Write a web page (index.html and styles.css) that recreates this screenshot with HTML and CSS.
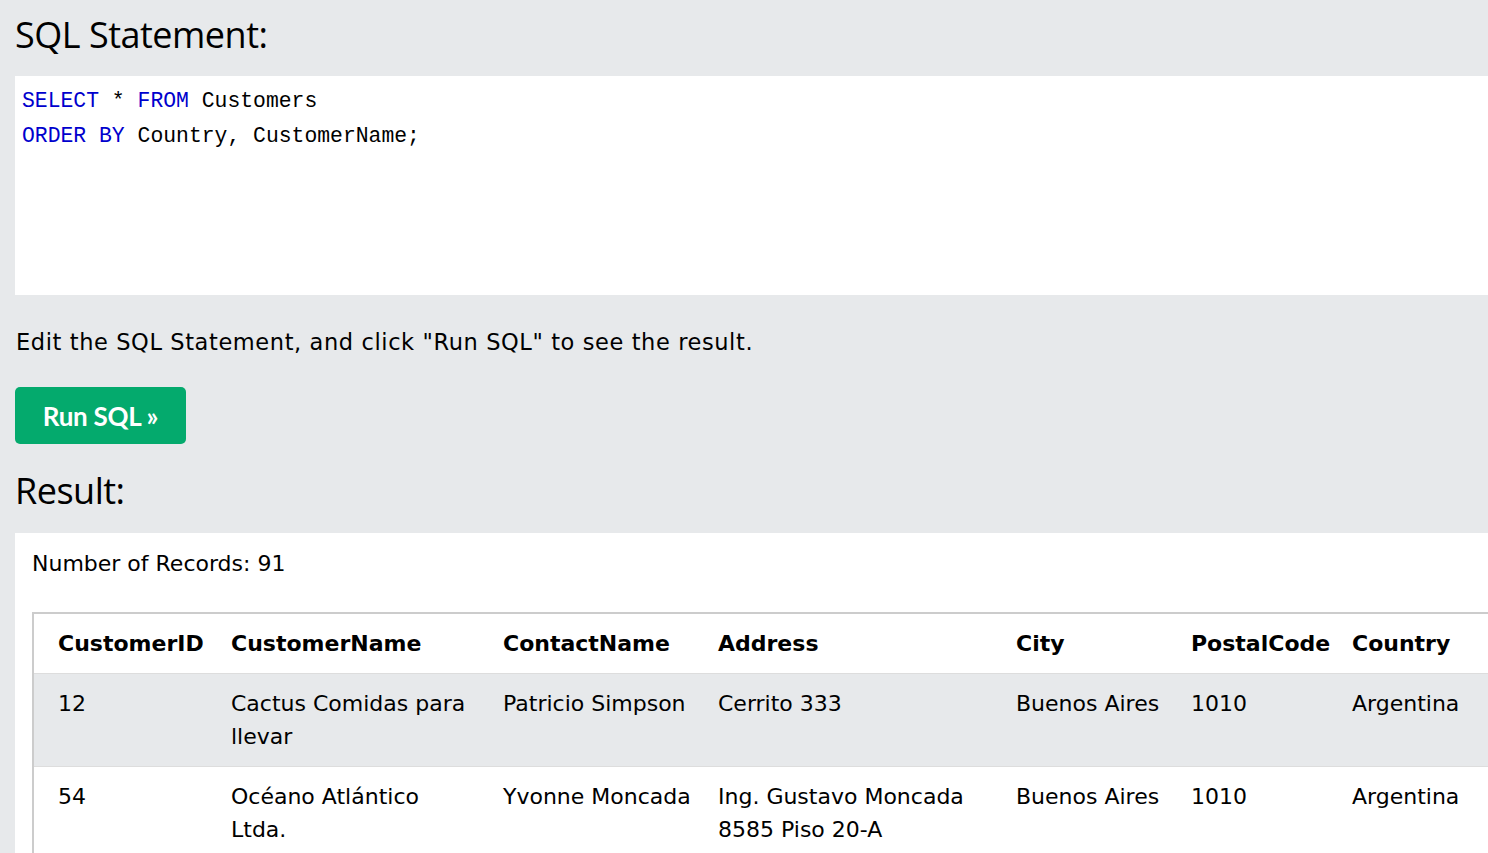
FILE: index.html
```html
<!DOCTYPE html>
<html>
<head>
<meta charset="utf-8">
<link rel="stylesheet" href="styles.css">
</head>
<body>
<h2 class="title">SQL Statement:</h2>
<div class="code"><div class="code-line"><span class="kw">SELECT</span> * <span class="kw">FROM</span> Customers</div><div class="code-line"><span class="kw">ORDER BY</span> Country, CustomerName;</div></div>
<p class="hint">Edit the SQL Statement, and click "Run SQL" to see the result.</p>
<button class="run">Run SQL »</button>
<h2 class="title result-title">Result:</h2>
<div class="result">
  <div class="records">Number of Records: 91</div>
  <table class="grid">
    <colgroup>
      <col class="c1"><col class="c2"><col class="c3"><col class="c4"><col class="c5"><col class="c6"><col class="c7">
    </colgroup>
    <tr class="head"><th>CustomerID</th><th>CustomerName</th><th>ContactName</th><th>Address</th><th>City</th><th>PostalCode</th><th>Country</th></tr>
    <tr class="odd"><td>12</td><td>Cactus Comidas para llevar</td><td>Patricio Simpson</td><td>Cerrito 333</td><td>Buenos Aires</td><td>1010</td><td>Argentina</td></tr>
    <tr class="even"><td>54</td><td>Océano Atlántico Ltda.</td><td>Yvonne Moncada</td><td>Ing. Gustavo Moncada 8585 Piso 20-A</td><td>Buenos Aires</td><td>1010</td><td>Argentina</td></tr>
  </table>
</div>
</body>
</html>
```
FILE: styles.css
```css
html, body {
  margin: 0;
  overflow: hidden;
}
body {
  background: #e7e9eb;
  padding-left: 15px;
  font-family: "DejaVu Sans", Verdana, sans-serif;
  font-size: 22px;
  color: #000;
  height: 853px;
}
.title {
  font-family: "Open Sans", sans-serif;
  font-weight: 400;
  font-size: 36px;
  line-height: 50px;
  margin: 10px 0 0 0;
  letter-spacing: -0.5px;
}
.code {
  margin-top: 16px;
  background: #fff;
  height: 219px;
  box-sizing: border-box;
  padding: 8px 7px;
  font-family: "Liberation Mono", monospace;
  font-size: 21.4px;
}
.code-line {
  line-height: 35px;
  white-space: pre;
}
.kw {
  color: #0000cd;
}
.hint {
  margin: 32px 0 0 1px;
  line-height: 30px;
  font-size: 22.5px;
  letter-spacing: 0.6px;
}
.run {
  display: block;
  margin-top: 30px;
  width: 171px;
  height: 57px;
  border: none;
  border-radius: 5px;
  background: #04aa6d;
  color: #fff;
  font-family: Lato, sans-serif;
  font-weight: 700;
  font-size: 26px;
  padding: 0;
  letter-spacing: -0.3px;
}
.result-title {
  margin-top: 22px;
}
.result {
  margin-top: 17px;
  background: #fff;
  padding: 16px 0 0 17px;
  height: 400px;
  overflow: hidden;
}
.records {
  line-height: 30px;
}
.grid {
  margin-top: 33px;
  border-collapse: collapse;
  table-layout: fixed;
  width: 1600px;
  border: 2px solid #ccc;
}
.c1 { width: 185px; }
.c2 { width: 272px; }
.c3 { width: 215px; }
.c4 { width: 298px; }
.c5 { width: 175px; }
.c6 { width: 161px; }
.c7 { width: 294px; }
.grid th, .grid td {
  text-align: left;
  vertical-align: top;
  padding: 13px 13px;
  line-height: 33px;
}
.grid th:first-child, .grid td:first-child {
  padding-left: 24px;
}
.grid th {
  font-weight: 700;
}
.grid tr {
  border-bottom: 1px solid #ddd;
}
.grid .odd {
  background: #e7e9eb;
}
.grid .even {
  background: #fff;
}
```
